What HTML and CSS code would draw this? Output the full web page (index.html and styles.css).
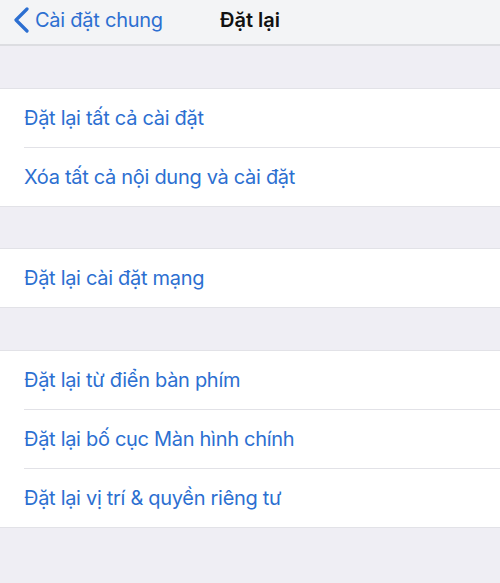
FILE: index.html
```html
<!DOCTYPE html>
<html lang="vi">
<head>
<meta charset="utf-8">
<link rel="stylesheet" href="styles.css">
</head>
<body>
<div class="screen">
  <header class="nav">
    <div class="back">
      <svg class="chev" width="18" height="26" viewBox="0 0 18 26"><path d="M15 2 L4 13 L15 24" fill="none" stroke="#2c6fd1" stroke-width="3.2" stroke-linecap="round" stroke-linejoin="round"/></svg>
      <span>Cài đặt chung</span>
    </div>
    <div class="title">Đặt lại</div>
  </header>
  <div class="gap"></div>
  <ul class="group">
    <li>Đặt lại tất cả cài đặt</li>
    <li>Xóa tất cả nội dung và cài đặt</li>
  </ul>
  <div class="gap gap-narrow"></div>
  <ul class="group">
    <li>Đặt lại cài đặt mạng</li>
  </ul>
  <div class="gap"></div>
  <ul class="group">
    <li>Đặt lại từ điển bàn phím</li>
    <li>Đặt lại bố cục Màn hình chính</li>
    <li>Đặt lại vị trí &amp; quyền riêng tư</li>
  </ul>
</div>
</body>
</html>
```
FILE: styles.css
```css
html, body { margin: 0; padding: 0; }
body {
  background: #efeef4;
  font-family: Inter, "Noto Sans", sans-serif;
  width: 500px;
  height: 583px;
  overflow: hidden;
}
.screen { display: flex; flex-direction: column; }
.nav {
  height: 44px;
  background: #f3f4f6;
  border-bottom: 2px solid #dcdde1;
  display: flex;
  align-items: center;
  position: relative;
}
.back {
  display: flex;
  align-items: center;
  gap: 5px;
  padding-left: 12px;
  padding-bottom: 4px;
  color: #2c6fd1;
  font-size: 20px;
  letter-spacing: -0.25px;
}
.title {
  position: absolute;
  left: 220px;
  top: 0;
  height: 40px;
  display: flex;
  align-items: center;
  font-size: 20px;
  font-weight: 600;
  color: #111;
}
.gap { height: 42px; }
.gap-narrow { height: 41px; }
.group {
  list-style: none;
  margin: 0;
  padding: 0;
  background: #fff;
  border-top: 1px solid #e2e2e7;
  border-bottom: 1px solid #e2e2e7;
}
.group li {
  height: 58px;
  display: flex;
  align-items: center;
  padding-left: 24px;
  color: #2c6fd1;
  font-size: 20px;
  letter-spacing: -0.3px;
}
.group li + li { border-top: 1px solid #e2e2e7; margin-left: 24px; padding-left: 0; }
```
